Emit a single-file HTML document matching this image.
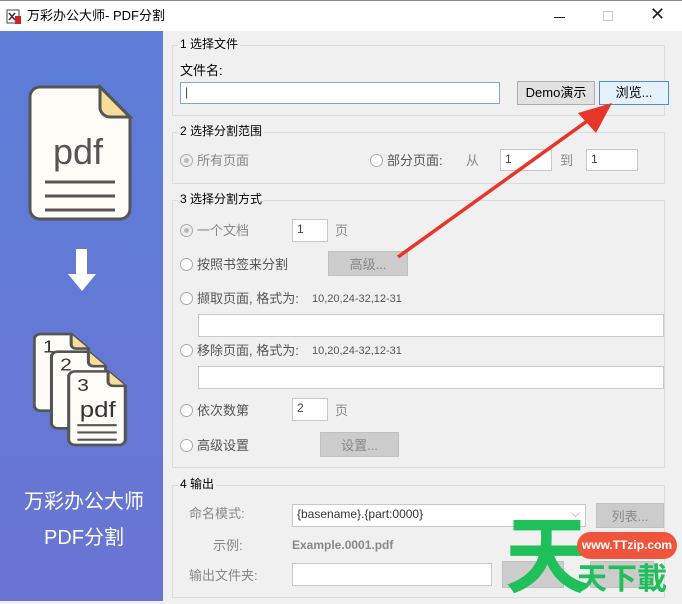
<!DOCTYPE html>
<html><head><meta charset="utf-8"><style>
*{margin:0;padding:0;box-sizing:border-box}
body{width:682px;height:601px;overflow:hidden;background:#f0f0f0;font-family:"Liberation Sans","Noto Sans CJK SC",sans-serif;font-size:13px;color:#000;position:relative;line-height:1.15}
.a{position:absolute}
.title{left:0;top:0;width:682px;height:31px;background:#fff;border-top:1px solid #888}
.left{left:0;top:31px;width:163px;height:570px;background:linear-gradient(#5c7ed8,#6a74d2)}
.grp{position:absolute;border:1px solid #dcdcdc;left:172px;width:493px}
.gl{position:absolute;background:#f0f0f0;padding:0 2px;font-size:12px}
.in{position:absolute;background:#fff;border:1px solid #c8c8c8;font-size:12px;padding:3px 4px;color:#444}
.btn{position:absolute;background:#ccc;border:1px solid #c0c0c0;color:#888;font-size:13px;text-align:center}
.rad{position:absolute;width:13px;height:13px;border:1px solid #aaa;border-radius:50%;background:#fff}
.g{color:#888}
.t{position:absolute;white-space:nowrap;margin-top:2px}
</style></head><body>
<div class="a title">
 <svg class="a" style="left:6px;top:8px" width="16" height="16"><rect x="1" y="1" width="12" height="13" fill="#fff" stroke="#444"/><path d="M3 4l6 7M9 4l-6 7" stroke="#333" stroke-width="1.5"/><rect x="9" y="7" width="6" height="8" fill="#c22"/></svg>
 <div class="t" style="left:27px;top:6px;font-size:13px">万彩办公大师- PDF分割</div>
 <div class="a" style="left:554px;top:16px;width:11px;height:1px;background:#222"></div>
 <div class="a" style="left:603px;top:10px;width:10px;height:10px;border:1px solid #ccc"></div>
 <div class="t" style="left:650px;top:1px;font-size:18px;color:#222">✕</div>
</div>
<div class="a left">
 <svg class="a" style="left:28px;top:53px" width="110" height="140"><path d="M12 3h60l30 30v92a10 10 0 0 1-10 10H12a10 10 0 0 1-10-10V13a10 10 0 0 1 10-10z" fill="#fdfcf7" stroke="#555" stroke-width="3"/><path d="M72 3v20a10 10 0 0 0 10 10h20z" fill="#f8dd9a" stroke="#555" stroke-width="3"/><text x="25" y="80" font-family="Liberation Sans" font-size="36" fill="#555">pdf</text><path d="M17 98h70M17 112h70M17 126h70" stroke="#555" stroke-width="3"/></svg>
 <div class="a" style="left:76px;top:218px;width:11px;height:26px;background:#fff"></div>
 <div class="a" style="left:68px;top:243px;border-left:14px solid transparent;border-right:14px solid transparent;border-top:17px solid #fff"></div>
 <svg class="a" style="left:33px;top:301px" width="96" height="116" viewBox="0 0 78 112" preserveAspectRatio="none">
  <g stroke="#555" stroke-width="2.5">
  <path d="M6 2h25l14 14v55a5 5 0 0 1-5 5H6a5 5 0 0 1-5-5V7a5 5 0 0 1 5-5z" fill="#fdfcf7"/><path d="M31 2v10a4 4 0 0 0 4 4h10" fill="#f8dd9a"/>
  <path d="M20 19h25l14 14v55a5 5 0 0 1-5 5H20a5 5 0 0 1-5-5V24a5 5 0 0 1 5-5z" fill="#fdfcf7"/><path d="M45 19v10a4 4 0 0 0 4 4h10" fill="#f8dd9a"/>
  <path d="M34 38h27l14 14v52a5 5 0 0 1-5 5H34a5 5 0 0 1-5-5V43a5 5 0 0 1 5-5z" fill="#fdfcf7"/><path d="M61 38v10a4 4 0 0 0 4 4h10" fill="#f8dd9a"/></g>
  <text x="8" y="20" font-size="17" fill="#333" font-family="Liberation Sans">1</text>
  <text x="22" y="37" font-size="17" fill="#333" font-family="Liberation Sans">2</text>
  <text x="36" y="57" font-size="17" fill="#333" font-family="Liberation Sans">3</text>
  <text x="38" y="82" font-size="21" fill="#333" font-family="Liberation Sans">pdf</text>
  <path d="M36 90h32M36 97h32M36 104h32" stroke="#555" stroke-width="2"/></svg>
 <div class="t" style="left:24px;top:458px;font-size:20px;color:#fff">万彩办公大师</div>
 <div class="t" style="left:44px;top:494px;font-size:20px;color:#fff">PDF分割</div>
</div>

<div class="grp" style="top:45px;height:71px"></div><div class="gl" style="left:178px;top:38px">1 选择文件</div>
<div class="t" style="left:180px;top:62px;font-size:13px">文件名:</div>
<div class="in" style="left:180px;top:82px;width:320px;height:22px;border-color:#7aa7d6">|</div>
<div class="btn" style="left:517px;top:81px;width:78px;height:24px;color:#000;background:#e1e1e1;border-color:#adadad;line-height:22px">Demo演示</div>
<div class="btn" style="left:599px;top:81px;width:70px;height:24px;color:#000;background:#e5f1fb;border-color:#4a8ed8;line-height:22px">浏览...</div>

<div class="grp" style="top:132px;height:52px"></div><div class="gl" style="left:178px;top:125px">2 选择分割范围</div>
<div class="rad" style="left:180px;top:154px;background:#eee"></div><div class="a" style="left:184px;top:158px;width:5px;height:5px;border-radius:50%;background:#bbb"></div>
<div class="t g" style="left:197px;top:152px">所有页面</div>
<div class="rad" style="left:370px;top:154px"></div><div class="t" style="left:387px;top:152px;color:#555">部分页面:</div>
<div class="t g" style="left:466px;top:152px">从</div>
<div class="in" style="left:500px;top:149px;width:52px;height:22px">1</div>
<div class="t g" style="left:560px;top:152px">到</div>
<div class="in" style="left:586px;top:149px;width:52px;height:22px">1</div>

<div class="grp" style="top:200px;height:268px"></div><div class="gl" style="left:178px;top:193px">3 选择分割方式</div>
<div class="rad" style="left:180px;top:224px;background:#eee"></div><div class="a" style="left:184px;top:228px;width:5px;height:5px;border-radius:50%;background:#bbb"></div>
<div class="t g" style="left:197px;top:222px">一个文档</div>
<div class="in" style="left:292px;top:219px;width:36px;height:23px">1</div><div class="t g" style="left:335px;top:222px">页</div>
<div class="rad" style="left:180px;top:258px"></div><div class="t" style="left:197px;top:256px;color:#555">按照书签来分割</div>
<div class="btn" style="left:328px;top:251px;width:80px;height:25px;line-height:25px">高级...</div>
<div class="rad" style="left:180px;top:292px"></div><div class="t" style="left:197px;top:290px;color:#555">撷取页面, 格式为:</div><div class="t" style="left:312px;top:291px;font-size:11px;color:#555">10,20,24-32,12-31</div>
<div class="in" style="left:198px;top:314px;width:466px;height:23px"></div>
<div class="rad" style="left:180px;top:344px"></div><div class="t" style="left:197px;top:342px;color:#555">移除页面, 格式为:</div><div class="t" style="left:312px;top:343px;font-size:11px;color:#555">10,20,24-32,12-31</div>
<div class="in" style="left:198px;top:366px;width:466px;height:23px"></div>
<div class="rad" style="left:180px;top:404px"></div><div class="t" style="left:197px;top:402px;color:#555">依次数第</div>
<div class="in" style="left:292px;top:398px;width:36px;height:23px">2</div><div class="t g" style="left:335px;top:402px">页</div>
<div class="rad" style="left:180px;top:439px"></div><div class="t" style="left:197px;top:437px;color:#555">高级设置</div>
<div class="btn" style="left:320px;top:432px;width:79px;height:25px;line-height:25px">设置...</div>

<div class="grp" style="top:485px;height:113px"></div><div class="gl" style="left:178px;top:478px">4 输出</div>
<div class="t g" style="left:189px;top:505px">命名模式:</div>
<div class="in" style="left:292px;top:504px;width:294px;height:23px;color:#333">{basename}.{part:0000}<span style="position:absolute;right:5px;top:2px;color:#999">⌵</span></div>
<div class="btn" style="left:596px;top:503px;width:68px;height:25px;line-height:25px">列表...</div>
<div class="t g" style="left:213px;top:537px">示例:</div>
<div class="t" style="left:292px;top:537px;color:#888;font-weight:bold;font-size:12px">Example.0001.pdf</div>
<div class="t g" style="left:189px;top:567px">输出文件夹:</div>
<div class="in" style="left:292px;top:563px;width:200px;height:23px"></div>
<div class="btn" style="left:502px;top:561px;width:62px;height:27px"></div>
<div class="btn" style="left:590px;top:561px;width:64px;height:27px"></div>

<svg class="a" style="left:390px;top:95px" width="230" height="180"><path d="M8 162L200 24" stroke="#e8352a" stroke-width="3.5"/><path d="M222 8L188 18L206 38z" fill="#e8352a"/></svg>

<div class="t" style="left:505px;top:510px;font-size:84px;line-height:90px;color:#1fbf5a;font-weight:bold">天</div>
<div class="a" style="left:577px;top:532px;width:100px;height:27px;border-radius:14px;background:#f0543c;color:#fff;font-size:12px;font-weight:bold;text-align:center;line-height:27px">www.TTzip.com</div>
<div class="t" style="left:577px;top:560px;font-size:30px;color:#1fbf5a;font-weight:bold;line-height:36px">天下載</div>
</body></html>
